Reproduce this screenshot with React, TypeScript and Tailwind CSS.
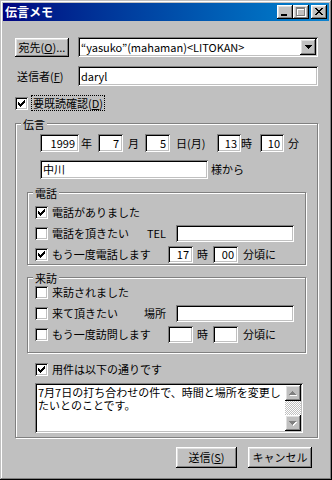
import React from "react";

const raised =
  "shadow-[inset_-1px_-1px_0_#000,inset_1px_1px_0_#fff,inset_-2px_-2px_0_#808080,inset_2px_2px_0_#dfdfdf]";
const sunken =
  "shadow-[inset_1px_1px_0_#808080,inset_-1px_-1px_0_#fff,inset_2px_2px_0_#000,inset_-2px_-2px_0_#c0c0c0]";
const etched = "border border-[#808080] shadow-[inset_1px_1px_0_#fff,1px_1px_0_#fff]";

function Check({ checked }: { checked?: boolean }) {
  return (
    <span className={`w-[13px] h-[13px] shrink-0 bg-white flex items-center justify-center ${sunken}`}>
      {checked && (
        <svg width="7" height="7" viewBox="0 0 7 7" shapeRendering="crispEdges">
          <path
            d="M6 0h1v1h-1z M5 1h2v1h-2z M0 2h1v1h-1z M4 2h3v1h-3z M0 3h2v1h-2z M3 3h3v1h-3z M0 4h5v1h-5z M1 5h3v1h-3z M2 6h1v1h-1z"
            fill="#000"
          />
        </svg>
      )}
    </span>
  );
}

function Field({
  w,
  h,
  children,
  right,
}: {
  w: string;
  h: string;
  children?: React.ReactNode;
  right?: boolean;
}) {
  return (
    <div
      className={`${w} ${h} shrink-0 bg-white ${sunken} flex items-center ${
        right ? "justify-end pr-[4px]" : "pl-[3px]"
      } leading-[13px] overflow-hidden whitespace-nowrap`}
    >
      {children}
    </div>
  );
}

function Group({
  label,
  cls,
  children,
}: {
  label: string;
  cls: string;
  children: React.ReactNode;
}) {
  return (
    <div className={`${cls} ${etched} shrink-0`}>
      <div className="-mt-[7px] ml-[5px] px-[2px] w-fit h-[14px] leading-[14px] bg-[#c0c0c0]">{label}</div>
      {children}
    </div>
  );
}

function Row({ children, cls = "" }: { children: React.ReactNode; cls?: string }) {
  return <div className={`flex items-center h-[21px] ${cls}`}>{children}</div>;
}

function ArrowGray({ up }: { up?: boolean }) {
  const d = up
    ? "M3 0h1v1h-1z M2 1h3v1h-3z M1 2h5v1h-5z M0 3h7v1h-7z"
    : "M0 0h7v1h-7z M1 1h5v1h-5z M2 2h3v1h-3z M3 3h1v1h-1z";
  return (
    <svg width="8" height="5" viewBox="0 0 8 5" shapeRendering="crispEdges">
      <g transform="translate(1,1)">
        <path d={d} fill="#fff" />
      </g>
      <path d={d} fill="#808080" />
    </svg>
  );
}

export default function App() {
  return (
    <div className="w-[332px] h-[480px] bg-[#c0c0c0] p-[3px] text-[11px] text-black font-['Noto_Sans_CJK_JP','Liberation_Sans',sans-serif] shadow-[inset_-1px_-1px_0_#000,inset_1px_1px_0_#c0c0c0,inset_-2px_-2px_0_#808080,inset_2px_2px_0_#fff] overflow-hidden">
      {/* Title bar */}
      <div className="h-[18px] flex items-center pl-[2px] pr-[2px] bg-gradient-to-r from-[#000080] to-[#1084d0]">
        <span className="text-white font-bold text-[12px] leading-[14px]">伝言メモ</span>
        <div className="ml-auto flex items-center">
          <div className={`w-[16px] h-[14px] bg-[#c0c0c0] ${raised} flex`}>
            <svg width="16" height="14" viewBox="0 0 16 14" shapeRendering="crispEdges">
              <rect x="4" y="9" width="6" height="2" fill="#000" />
            </svg>
          </div>
          <div className={`w-[16px] h-[14px] bg-[#c0c0c0] ${raised} flex`}>
            <svg width="16" height="14" viewBox="0 0 16 14" shapeRendering="crispEdges">
              <path d="M4 3h9v9h-9z M5 5v6h7v-6z" fill="#fff" fillRule="evenodd" />
              <path d="M3 2h9v9h-9z M4 4v6h7v-6z" fill="#808080" fillRule="evenodd" />
            </svg>
          </div>
          <div className={`ml-[2px] w-[16px] h-[14px] bg-[#c0c0c0] ${raised} flex`}>
            <svg width="16" height="14" viewBox="0 0 16 14" shapeRendering="crispEdges">
              <path
                d="M4 3h2v1h-2z M10 3h2v1h-2z M5 4h2v1h-2z M9 4h2v1h-2z M6 5h4v1h-4z M7 6h2v1h-2z M6 7h4v1h-4z M5 8h2v1h-2z M9 8h2v1h-2z M4 9h2v1h-2z M10 9h2v1h-2z"
                fill="#000"
              />
            </svg>
          </div>
        </div>
      </div>

      {/* Content */}
      <div className="pl-[12px] pt-[16px]">
        {/* Row 1 */}
        <div className="flex items-start h-[20px]">
          <div
            className={`mt-[1px] w-[54px] h-[19px] ${raised} flex items-center justify-center leading-[13px] whitespace-nowrap`}
          >
            宛先(<span className="underline">O</span>)...
          </div>
          <div className={`ml-[9px] w-[240px] h-[20px] bg-white ${sunken} flex items-center pl-[3px] pr-[2px]`}>
            <span className="leading-[13px] whitespace-nowrap">“yasuko”(mahaman)&lt;LITOKAN&gt;</span>
            <div className={`ml-auto w-[16px] h-[16px] bg-[#c0c0c0] ${raised} flex items-center justify-center`}>
              <svg width="7" height="4" viewBox="0 0 7 4" shapeRendering="crispEdges">
                <path d="M0 0h7v1h-7z M1 1h5v1h-5z M2 2h3v1h-3z M3 3h1v1h-1z" fill="#000" />
              </svg>
            </div>
          </div>
        </div>

        {/* Row 2 */}
        <div className="mt-[9px] flex items-center h-[20px]">
          <div className="w-[63px] pl-[2px] whitespace-nowrap">
            送信者(<span className="underline">F</span>)
          </div>
          <Field w="w-[240px]" h="h-[20px]">daryl</Field>
        </div>

        {/* Row 3 */}
        <div className="mt-[9px] flex items-center h-[16px]">
          <Check checked />
          <span className="ml-[3px] px-[1px] h-[16px] leading-[14px] border border-dotted border-black whitespace-nowrap">
            要既読確認(<span className="underline">D</span>)
          </span>
        </div>

        {/* Group 伝言 */}
        <Group label="伝言" cls="mt-[12px] w-[303px] h-[315px]">
          <div className="mt-[3px] ml-[24px] flex items-center h-[18px]">
            <Field w="w-[39px]" h="h-[18px]" right>
              1999
            </Field>
            <span className="w-[19px] pl-[2px]">年</span>
            <Field w="w-[25px]" h="h-[18px]" right>
              7
            </Field>
            <span className="w-[22px] pl-[5px]">月</span>
            <Field w="w-[25px]" h="h-[18px]" right>
              5
            </Field>
            <span className="w-[47px] pl-[6px] whitespace-nowrap">日(月)</span>
            <Field w="w-[24px]" h="h-[18px]" right>
              13
            </Field>
            <span className="w-[19px]">時</span>
            <Field w="w-[24px]" h="h-[18px]" right>
              10
            </Field>
            <span className="pl-[4px]">分</span>
          </div>

          <div className="mt-[8px] ml-[24px] flex items-center h-[19px]">
            <Field w="w-[168px]" h="h-[19px]">
              中川
            </Field>
            <span className="ml-[3px]">様から</span>
          </div>

          {/* 電話 */}
          <Group label="電話" cls="mt-[13px] ml-[11px] w-[279px] h-[73px]">
            <div className="mt-[2px] pl-[7px]">
              <Row>
                <Check checked />
                <span className="ml-[4px]">電話がありました</span>
              </Row>
              <Row>
                <div className="w-[112px] flex items-center">
                  <Check />
                  <span className="ml-[4px] whitespace-nowrap">電話を頂きたい</span>
                </div>
                <span className="w-[29px]">TEL</span>
                <Field w="w-[118px]" h="h-[17px]" />
              </Row>
              <Row>
                <div className="w-[133px] flex items-center">
                  <Check checked />
                  <span className="ml-[4px] whitespace-nowrap">もう一度電話します</span>
                </div>
                <Field w="w-[25px]" h="h-[17px]" right>
                  17
                </Field>
                <span className="w-[20px] pl-[4px]">時</span>
                <Field w="w-[25px]" h="h-[17px]" right>
                  00
                </Field>
                <span className="pl-[5px] whitespace-nowrap">分頃に</span>
              </Row>
            </div>
          </Group>

          {/* 来訪 */}
          <Group label="来訪" cls="mt-[12px] ml-[11px] w-[279px] h-[76px]">
            <div className="-mt-[3px] pl-[7px]">
              <Row>
                <Check />
                <span className="ml-[4px]">来訪されました</span>
              </Row>
              <Row>
                <div className="w-[109px] flex items-center">
                  <Check />
                  <span className="ml-[4px] whitespace-nowrap">来て頂きたい</span>
                </div>
                <span className="w-[32px]">場所</span>
                <Field w="w-[118px]" h="h-[17px]" />
              </Row>
              <Row>
                <div className="w-[133px] flex items-center">
                  <Check />
                  <span className="ml-[4px] whitespace-nowrap">もう一度訪問します</span>
                </div>
                <Field w="w-[25px]" h="h-[17px]" />
                <span className="w-[20px] pl-[4px]">時</span>
                <Field w="w-[25px]" h="h-[17px]" />
                <span className="pl-[5px] whitespace-nowrap">分頃に</span>
              </Row>
            </div>
          </Group>

          {/* 用件 */}
          <div className="mt-[8px] ml-[19px] flex items-center h-[16px]">
            <Check checked />
            <span className="ml-[4px]">用件は以下の通りです</span>
          </div>

          <div className={`mt-[6px] ml-[19px] w-[268px] h-[50px] bg-white ${sunken} flex p-[2px]`}>
            <div className="flex-1 pl-[1px] pt-[1px] leading-[13px] whitespace-nowrap overflow-hidden">
              <div>7月7日の打ち合わせの件で、時間と場所を変更し</div>
              <div>たいとのことです。</div>
            </div>
            <div className="w-[16px] flex flex-col">
              <div className={`w-[16px] h-[16px] bg-[#c0c0c0] ${raised} flex items-center justify-center`}>
                <ArrowGray up />
              </div>
              <div className="flex-1 bg-[repeating-conic-gradient(#c0c0c0_0_25%,#fff_0_50%)] bg-[length:2px_2px]" />
              <div className={`w-[16px] h-[16px] bg-[#c0c0c0] ${raised} flex items-center justify-center`}>
                <ArrowGray />
              </div>
            </div>
          </div>
        </Group>

        {/* Buttons */}
        <div className="mt-[9px] ml-[161px] flex items-center">
          <div className={`w-[61px] h-[21px] ${raised} flex items-center justify-center`}>
            送信(<span className="underline">S</span>)
          </div>
          <div className={`ml-[11px] w-[64px] h-[21px] ${raised} flex items-center justify-center`}>
            キャンセル
          </div>
        </div>
      </div>
    </div>
  );
}
